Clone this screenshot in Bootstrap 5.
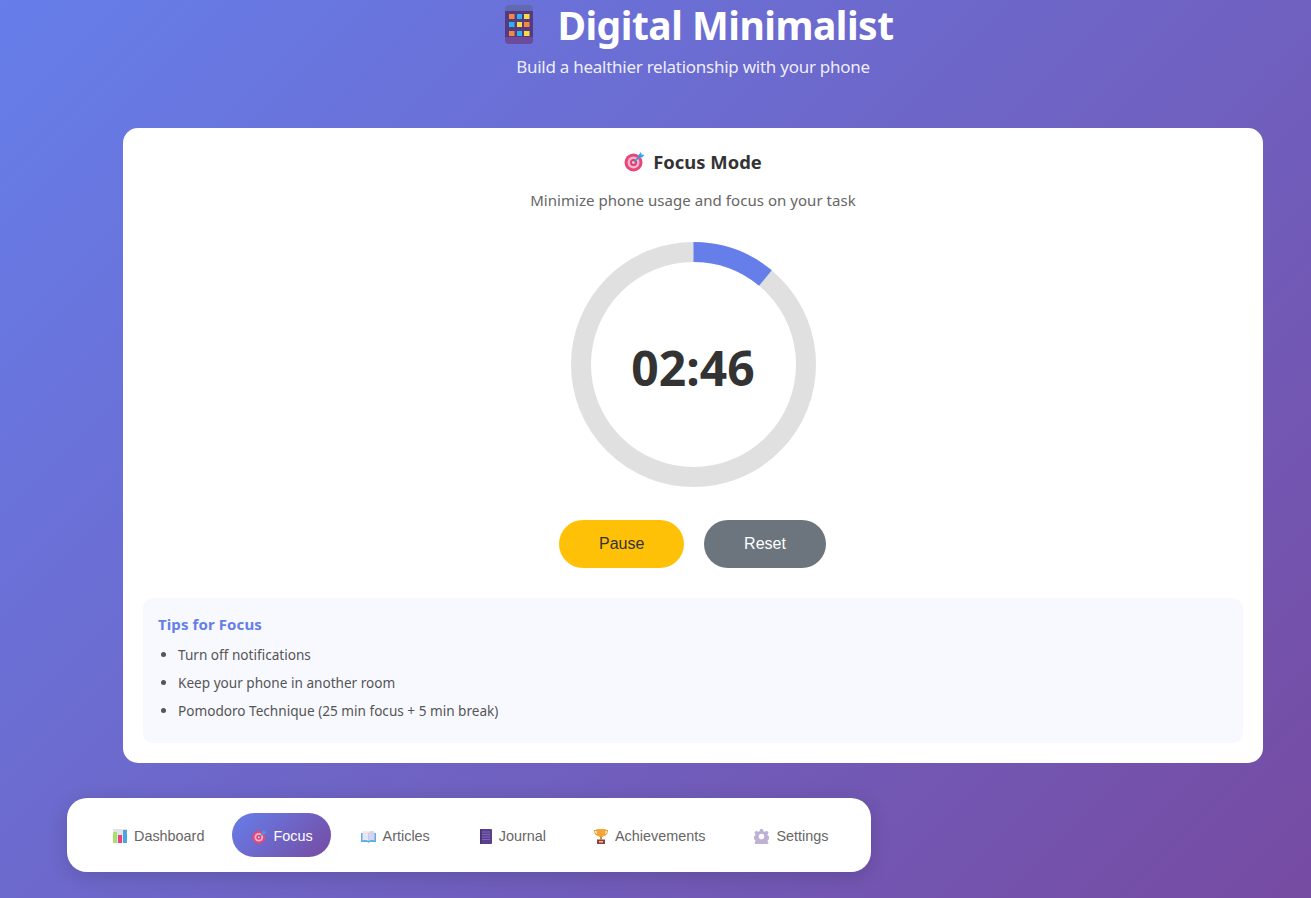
<!DOCTYPE html>
<html lang="en">
<head>
<meta charset="utf-8">
<title>Digital Minimalist</title>
<link href="https://cdn.jsdelivr.net/npm/bootstrap@5.3.0/dist/css/bootstrap.min.css" rel="stylesheet">
<style>
html,body{height:100%;overflow:hidden}
body{background:linear-gradient(135deg,#667eea 0%,#764ba2 100%);font-family:"Noto Sans","Open Sans",sans-serif;color:#333}
.shell{padding-left:123px;padding-right:48px}
.hero{height:128px;color:#fff}
.hero-title{font-size:39px;font-weight:700;line-height:50px;margin:0;gap:23px;letter-spacing:-.5px;padding-left:12px}
.hero-sub{font-size:17px;line-height:26px;margin-top:4px;color:rgba(255,255,255,.9);letter-spacing:-.26px}
.panel{background:#fff;border-radius:15px;padding:19px 20px 20px;height:635px}
.panel-title{font-size:18.4px;font-weight:700;line-height:29px;gap:8px;margin:0}
.panel-sub{font-size:15px;line-height:22px;color:#666;margin:13px 0 0;letter-spacing:.05px}
.ring-wrap{width:245px;height:245px;margin:31px auto 0}
.ring-time{font-size:48px;font-weight:700;color:#333;margin-top:3px}
.actions{gap:20px;margin:33px 0 0 -1px}
.act{font-family:"Liberation Sans",Arial,sans-serif;font-size:16px;height:48px;border-radius:25px;border:0;padding:0 40px;line-height:48px}
.act-pause{width:125px;color:#333}
.act-reset{width:122px;color:#fff}
.tips{background:#f8f9ff;border-radius:10px;margin-top:30px;padding:15px;height:145px}
.tips-title{font-size:15px;font-weight:700;color:#667eea;line-height:22px;margin:0 0 10px;letter-spacing:.1px}
.tips-list{margin:0;padding-left:20px;font-size:13.6px;color:#555}
.tips-list li{line-height:20px;margin-bottom:8px}
.dock{margin:35px 0 0 67px;width:804px;height:74px;background:#fff;border-radius:20px;box-shadow:0 4px 20px rgba(0,0,0,.15);padding:15px 0 15px 26px;gap:10px;font-family:"Liberation Sans",Arial,sans-serif}
.dock-item{height:44px;padding:2px 18px 0 20px;border-radius:22px;color:#666;font-size:14.4px;text-decoration:none;gap:7px}
.dock-item span{padding-top:2px}
.dock-item.on{background:linear-gradient(135deg,#667eea,#764ba2);color:#fff;gap:6px}
.dock-item svg{flex:none}
.dock-journal{margin-left:2px}
.dock-last{margin-left:1px}
</style>
</head>
<body>
<div class="shell">
  <header class="hero text-center">
    <h1 class="hero-title d-flex justify-content-center align-items-center">
      <svg width="30" height="40" viewBox="0 0 30 40" aria-hidden="true"><rect x="1" y="0" width="28" height="39" rx="4" fill="#5f6ab0"/><rect x="1" y="6" width="28" height="26" fill="#553a82"/><path d="M1 32h28v3a4 4 0 0 1-4 4H5a4 4 0 0 1-4-4z" fill="#6d4a9c"/><g><rect x="5" y="9" width="5.500" height="5" fill="#f58a3c"/><rect x="13" y="9" width="5" height="5" fill="#27b4f0"/><rect x="20" y="9" width="5.500" height="5" fill="#f9dc3e"/><rect x="5" y="17" width="5.500" height="5" fill="#27b4f0"/><rect x="13" y="17" width="5" height="5" fill="#f9dc3e"/><rect x="20" y="17" width="5.500" height="5" fill="#f58a3c"/><rect x="5" y="26" width="5.500" height="5" fill="#f58a3c"/><rect x="13" y="26" width="5" height="5" fill="#27b4f0"/><rect x="20" y="26" width="5.500" height="5" fill="#f9dc3e"/></g></svg>
      <span>Digital Minimalist</span>
    </h1>
    <p class="hero-sub mb-0">Build a healthier relationship with your phone</p>
  </header>
  <main class="panel">
    <h2 class="panel-title d-flex justify-content-center align-items-center text-center">
      <svg width="21" height="21" viewBox="0 0 21 21" aria-hidden="true"><circle cx="9.500" cy="11.500" r="9" fill="#e8457a"/><circle cx="9.500" cy="11.500" r="6" fill="#f4b6cc"/><circle cx="9.500" cy="11.500" r="3.500" fill="#e0406f"/><circle cx="9.500" cy="11.500" r="1.400" fill="#f8d3df"/><path d="M10 11 L17 4" stroke="#3a9be0" stroke-width="1.600"/><path d="M14.500 4 L17 1 L17.500 3.500 L20.500 4 L18 6.500 L15.500 6.500z" fill="#35a5ec"/></svg>
      <span>Focus Mode</span>
    </h2>
    <p class="panel-sub text-center">Minimize phone usage and focus on your task</p>
    <div class="ring-wrap position-relative">
      <svg width="245" height="245" viewBox="0 0 245 245" aria-hidden="true">
        <circle cx="122.500" cy="122.500" r="112.500" fill="none" stroke="#e0e0e0" stroke-width="20"/>
        <circle cx="122.500" cy="122.500" r="112.500" fill="none" stroke="#667eea" stroke-width="20" stroke-dasharray="78 630" transform="rotate(-90 122.500 122.500)"/>
      </svg>
      <div class="ring-time position-absolute top-50 start-50 translate-middle">02:46</div>
    </div>
    <div class="actions d-flex justify-content-center">
      <button class="btn btn-warning act act-pause" type="button">Pause</button>
      <button class="btn btn-secondary act act-reset" type="button">Reset</button>
    </div>
    <section class="tips">
      <h3 class="tips-title">Tips for Focus</h3>
      <ul class="tips-list">
        <li>Turn off notifications</li>
        <li>Keep your phone in another room</li>
        <li>Pomodoro Technique (25 min focus + 5 min break)</li>
      </ul>
    </section>
  </main>
</div>
<nav class="dock d-flex align-items-center">
  <a class="dock-item d-flex align-items-center" href="#">
    <svg width="14" height="14" viewBox="0 0 14 14" aria-hidden="true"><rect width="14" height="14" fill="#e3e3e6"/><rect x="0" y="3" width="4" height="11" fill="#a5e070"/><rect x="5" y="6" width="4" height="8" fill="#e8457a"/><rect x="10" y="1" width="4" height="13" fill="#4aa5e6"/></svg>
    <span>Dashboard</span>
  </a>
  <a class="dock-item on d-flex align-items-center" href="#">
    <svg width="15" height="15" viewBox="0 0 21 21" aria-hidden="true"><circle cx="9.500" cy="11.500" r="9" fill="#e8457a"/><circle cx="9.500" cy="11.500" r="6" fill="#f4b6cc"/><circle cx="9.500" cy="11.500" r="3.500" fill="#e0406f"/><circle cx="9.500" cy="11.500" r="1.400" fill="#f8d3df"/><path d="M10 11 L17 4" stroke="#3a9be0" stroke-width="1.600"/><path d="M14.500 4 L17 1 L17.500 3.500 L20.500 4 L18 6.500 L15.500 6.500z" fill="#35a5ec"/></svg>
    <span>Focus</span>
  </a>
  <a class="dock-item d-flex align-items-center" href="#">
    <svg width="15" height="13" viewBox="0 0 15 13" aria-hidden="true"><path d="M0 3h15v9H8.500l-1 1-1-1H0z" fill="#5aaeea"/><path d="M1.500 1.500c2.500-.8 4.500-.8 6 .3v9c-1.500-1-3.500-1-6-.4z" fill="#e9e6f5"/><path d="M13.500 1.500c-2.500-.8-4.500-.8-6 .3v9c1.500-1 3.500-1 6-.4z" fill="#d9d4ec"/></svg>
    <span>Articles</span>
  </a>
  <a class="dock-item dock-journal d-flex align-items-center" href="#">
    <svg width="12" height="15" viewBox="0 0 12 15" aria-hidden="true"><rect width="12" height="15" rx="1" fill="#5b3f8f"/><path d="M2 3h8M2 5.500h8M2 8h8M2 10.500h8" stroke="#7d6ab5" stroke-width="1"/><rect x="0" y="0" width="1.500" height="15" fill="#4a3278"/></svg>
    <span>Journal</span>
  </a>
  <a class="dock-item d-flex align-items-center" href="#">
    <svg width="14" height="15" viewBox="0 0 14 15" aria-hidden="true"><path d="M0 1h3v1H1c0 2 1 3 3 3.500V7C1.500 6.500 0 4 0 1zM14 1h-3v1h2c0 2-1 3-3 3.500V7c2.500-.5 4-3 4-6z" fill="#e8962f"/><path d="M2.500 0h9v3.500c0 2.500-2 4.500-4.500 4.500S2.500 6 2.500 3.500z" fill="#f4a533"/><rect x="6" y="7.500" width="2" height="3" fill="#d98a2a"/><rect x="3" y="10.500" width="8" height="4.500" fill="#8c3f4d"/><rect x="5" y="12" width="4" height="1.500" fill="#f4c46a"/></svg>
    <span>Achievements</span>
  </a>
  <a class="dock-item dock-last d-flex align-items-center" href="#">
    <svg width="15" height="15" viewBox="0 0 24 24" aria-hidden="true"><path fill="#bfb0d6" fill-rule="evenodd" d="M10 0h4l1 3.500 2.300 1 3.200-1.800 2.800 2.800-1.800 3.200 1 2.300 3.500 1v4l-3.500 1-1 2.300 1.800 3.200-2.800 2.800-3.200-1.800-2.300 1-1 3.500h-4l-1-3.500-2.300-1-3.200 1.800-2.800-2.800 1.800-3.200-1-2.300-3.500-1v-4l3.500-1 1-2.300-1.800-3.200 2.800-2.800 3.200 1.800 2.300-1z M12 7.500a4.500 4.500 0 1 0 0 9 4.500 4.500 0 0 0 0-9z"/></svg>
    <span>Settings</span>
  </a>
</nav>
<script src="https://cdn.jsdelivr.net/npm/bootstrap@5.3.0/dist/js/bootstrap.bundle.min.js"></script>
</body>
</html>
